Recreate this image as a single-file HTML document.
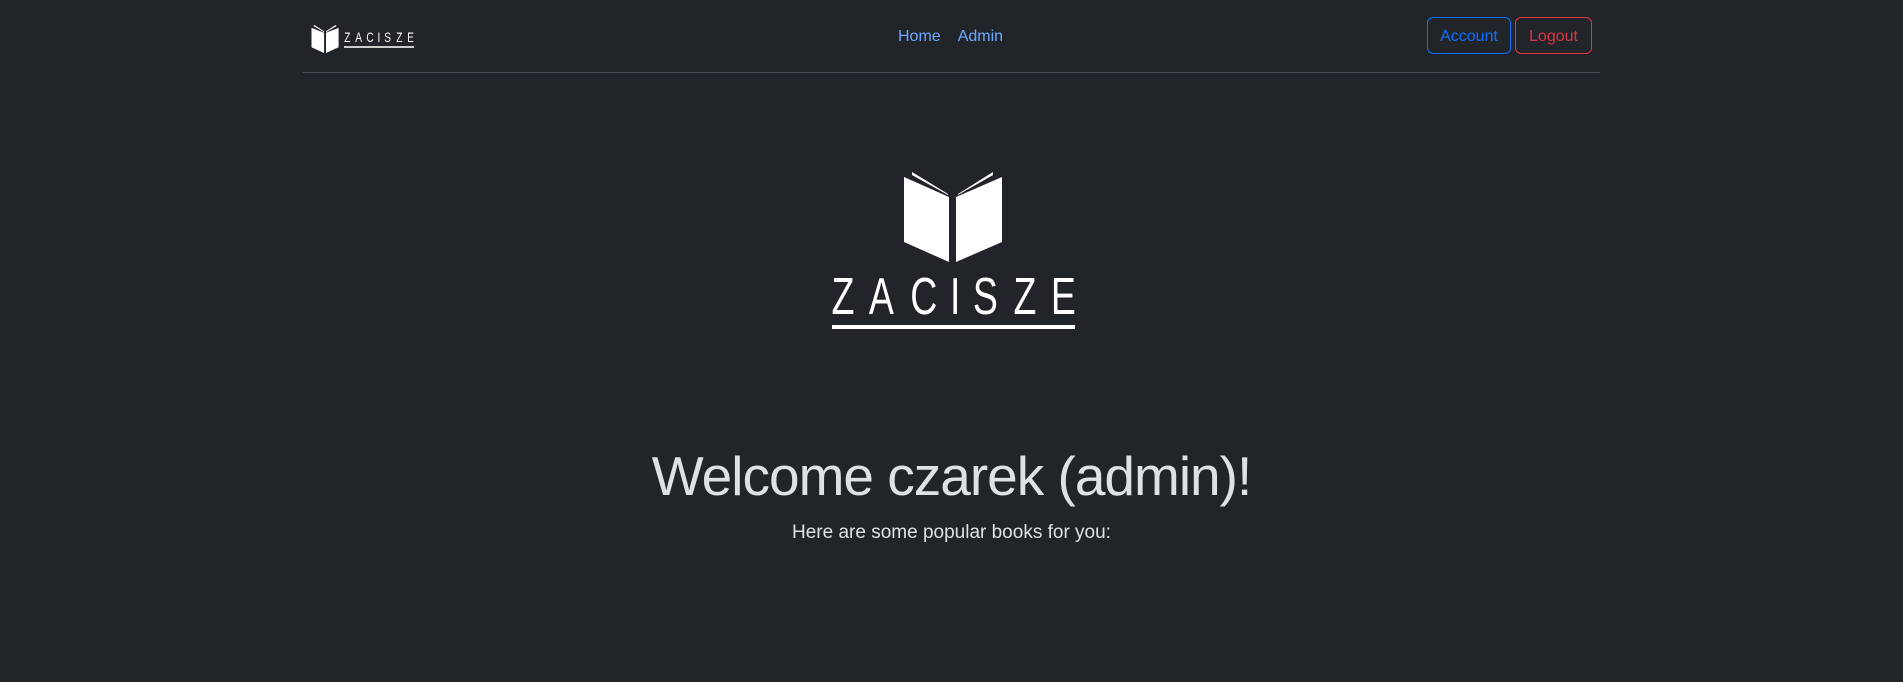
<!DOCTYPE html>
<html><head><meta charset="utf-8"><style>
html,body{margin:0;padding:0;background:#212529;width:1903px;height:682px;overflow:hidden;font-family:"Liberation Sans",sans-serif;color:#dee2e6}
.abs{position:absolute}
.nav a{color:#6ea8fe;text-decoration:none;font-size:16px}
.btn{position:absolute;box-sizing:border-box;border:1px solid;border-radius:6px;font-size:16px;display:flex;align-items:center;justify-content:center;padding-top:3px}
.spread{display:flex;justify-content:space-between}
.spread span{display:inline-block;transform:scaleX(0.72)}
</style></head><body>
<div class="abs" style="left:303px;top:72px;width:1297px;height:1px;background:#4a4f55"></div>
<svg class="abs" style="left:311px;top:25px" width="30" height="29" viewBox="0 0 30 30">
<polygon points="0,3 13,8 13,29 0,23" fill="#fff"/><polygon points="15,8 28,3 28,23 15,29" fill="#fff"/>
<polygon points="2,1 3,0 13,6.5 13,7.5" fill="#fff"/><polygon points="26,1 25,0 15,6.5 15,7.5" fill="#fff"/>
</svg>
<div class="abs spread" style="left:343px;top:30px;width:72px;font-size:14px;color:#fff;line-height:14px"><span>Z</span><span>A</span><span>C</span><span>I</span><span>S</span><span>Z</span><span>E</span></div>
<div class="abs" style="left:344px;top:46px;width:70px;height:1.5px;background:#ccc"></div>
<div class="abs nav" style="left:898px;top:27px;line-height:20px"><a>Home</a><a style="margin-left:17px">Admin</a></div>
<div class="btn" style="left:1427px;top:17px;width:84px;height:37px;border-color:#0d6efd;color:#0d6efd">Account</div>
<div class="btn" style="left:1515px;top:17px;width:77px;height:37px;border-color:#dc3545;color:#dc3545">Logout</div>
<svg class="abs" style="left:900px;top:168px" width="106" height="100" viewBox="900 168 106 100">
<polygon points="904,177 949,197 949,262 904,242" fill="#fff"/>
<polygon points="956,197 1002,177 1002,242 956,262" fill="#fff"/>
<polygon points="912,172 912,175 948,195 948,194" fill="#fff"/>
<polygon points="993,172 993,175 958,195 958,194" fill="#fff"/>
</svg>
<div class="abs spread" style="left:827px;top:272px;width:254px;font-size:52px;line-height:50px;color:#fff"><span>Z</span><span>A</span><span>C</span><span>I</span><span>S</span><span>Z</span><span>E</span></div>
<div class="abs" style="left:832px;top:325px;width:243px;height:4px;background:#fff"></div>
<div class="abs" style="left:0;top:444px;width:1903px;text-align:center;font-size:55px;line-height:64px;font-weight:300;color:#dee2e6;letter-spacing:-1px">Welcome czarek (admin)!</div>
<div class="abs" style="left:0;top:521px;width:1903px;text-align:center;font-size:19px;line-height:24px;font-weight:300;color:#dee2e6">Here are some popular books for you:</div>
</body></html>
